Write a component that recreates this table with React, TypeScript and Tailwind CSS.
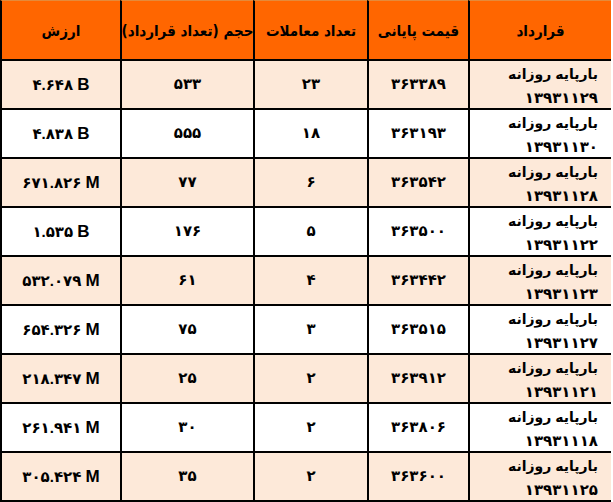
import React from "react"

type Row = {
	value: string
	unit: "B" | "M"
	volume: string
	trades: string
	price: string
	date: string
}

const rows: Row[] = [
	{ value: "۴.۶۴۸", unit: "B", volume: "۵۳۳", trades: "۲۳", price: "۳۶۳۳۸۹", date: "۱۳۹۳۱۱۲۹" },
	{ value: "۴.۸۳۸", unit: "B", volume: "۵۵۵", trades: "۱۸", price: "۳۶۳۱۹۳", date: "۱۳۹۳۱۱۳۰" },
	{ value: "۶۷۱.۸۲۶", unit: "M", volume: "۷۷", trades: "۶", price: "۳۶۳۵۴۲", date: "۱۳۹۳۱۱۲۸" },
	{ value: "۱.۵۳۵", unit: "B", volume: "۱۷۶", trades: "۵", price: "۳۶۳۵۰۰", date: "۱۳۹۳۱۱۲۲" },
	{ value: "۵۳۲.۰۷۹", unit: "M", volume: "۶۱", trades: "۴", price: "۳۶۳۴۴۲", date: "۱۳۹۳۱۱۲۳" },
	{ value: "۶۵۴.۳۲۶", unit: "M", volume: "۷۵", trades: "۳", price: "۳۶۳۵۱۵", date: "۱۳۹۳۱۱۲۷" },
	{ value: "۲۱۸.۳۴۷", unit: "M", volume: "۲۵", trades: "۲", price: "۳۶۳۹۱۲", date: "۱۳۹۳۱۱۲۱" },
	{ value: "۲۶۱.۹۴۱", unit: "M", volume: "۳۰", trades: "۲", price: "۳۶۳۸۰۶", date: "۱۳۹۳۱۱۱۸" },
	{ value: "۳۰۵.۴۲۴", unit: "M", volume: "۳۵", trades: "۲", price: "۳۶۳۶۰۰", date: "۱۳۹۳۱۱۲۵" },
]

const headers = ["ارزش", "حجم (تعداد قرارداد)", "تعداد معاملات", "قیمت پایانی", "قرارداد"]

const cell = "border-l-2 border-b-2 border-black flex items-center justify-center"

export default function App() {
	return (
		<div
			className="w-[613px] h-[502px] bg-white"
			style={{ fontFamily: '"Liberation Sans", "DejaVu Sans", sans-serif' }}
		>
			<div className="w-[611px] grid grid-cols-[120px_133px_114px_101px_143px] font-bold text-black">
				{/* Header */}
				{headers.map((h) => (
					<div
						key={h}
						dir="rtl"
						className={`${cell} h-[61px] bg-[#ff6600] border-t border-t-[#e58a3a] pt-[3px] text-[15px] whitespace-nowrap`}
						style={{ fontFamily: '"DejaVu Sans Condensed", "DejaVu Sans", sans-serif' }}
					>
						{h}
					</div>
				))}

				{/* Rows */}
				{rows.map((r, i) => {
					const bg = i % 2 === 0 ? "bg-[#fde9d9]" : "bg-white"
					return (
						<React.Fragment key={r.date}>
							<div className={`${cell} h-[49px] ${bg}`}>
								<span dir="ltr" className="text-[15px]">
									{r.value} <span className="text-[17px]">{r.unit}</span>
								</span>
							</div>
							<div className={`${cell} h-[49px] ${bg} text-[15px]`}>{r.volume}</div>
							<div className={`${cell} h-[49px] ${bg} text-[15px]`}>{r.trades}</div>
							<div className={`${cell} h-[49px] ${bg} text-[15px]`}>{r.price}</div>
							<div
								dir="rtl"
								className={`border-l-2 border-b-2 border-black h-[49px] ${bg} pr-[13px] pt-[1px] text-[14px] leading-[24px] text-right`}
							>
								<div>بارپایه روزانه</div>
								<div className="text-[15px]">{r.date}</div>
							</div>
						</React.Fragment>
					)
				})}
			</div>
		</div>
	)
}
